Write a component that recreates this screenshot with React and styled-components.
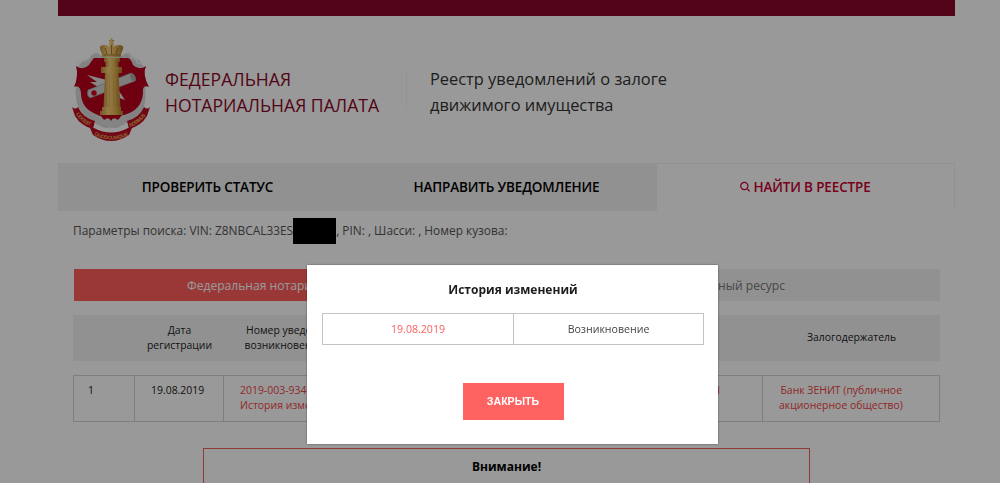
import React, { useState } from 'react';
import styled, { createGlobalStyle } from 'styled-components';

const GlobalStyle = createGlobalStyle`
  body {
    margin: 0;
    background: #fff;
    font-family: 'Open Sans', 'Noto Sans', sans-serif;
    overflow: hidden;
  }

  * {
    box-sizing: border-box;
  }
`;

const Page = styled.div`
  width: 897px;
  height: 483px;
  margin-left: 58px;
  overflow: hidden;
`;

const TopBar = styled.div`
  height: 15.5px;
  background: #8a0828;
`;

const Header = styled.header`
  display: flex;
  align-items: flex-start;
  height: 147.5px;
  padding: 21px 0 0 14px;
`;

const Emblem = styled.svg`
  width: 78px;
  height: 106px;
  flex: none;
`;

const Brand = styled.div`
  width: 242px;
  height: 39px;
  margin: 34px 0 0 15px;
  border-right: 1px solid #f4f4f4;
`;

const BrandText = styled.div`
  margin-top: -5px;
  font-size: 17.6px;
  line-height: 26px;
  color: #8a0828;
  white-space: nowrap;
`;

const ServiceName = styled.div`
  margin: 29px 0 0 23px;
  font-size: 16.4px;
  line-height: 26px;
  color: #333;
  white-space: nowrap;
`;

const Nav = styled.nav`
  display: flex;
  height: 48px;
`;

const NavItem = styled.a`
  display: flex;
  align-items: center;
  justify-content: center;
  flex: 1;
  gap: 3px;
  padding-bottom: 2px;
  border: 1px solid ${props => (props.$active ? '#f3f3f3' : '#f2f2f2')};
  border-bottom: none;
  background: ${props => (props.$active ? '#fff' : '#f2f2f2')};
  color: ${props => (props.$active ? '#c8002f' : '#000')};
  font-size: 13.5px;
  font-weight: 600;
  letter-spacing: -0.15px;
  white-space: nowrap;
`;

const Content = styled.main`
  padding: 0 15px;
`;

const SearchParams = styled.div`
  display: flex;
  align-items: center;
  height: 39px;
  font-size: 11.9px;
  color: #555;
  white-space: pre;
`;

const ParamsText = styled.span`
  padding-bottom: 2px;
`;

const Redacted = styled.span`
  width: 43px;
  height: 26px;
  background: #000;
`;

const Sources = styled.div`
  display: flex;
  height: 32px;
  margin: 19px 0 0 1px;
`;

const Source = styled.div`
  flex: 1;
  padding: ${props => (props.$active ? '0 0 0 113px' : '0 155px 0 0')};
  text-align: ${props => (props.$active ? 'left' : 'right')};
  background: ${props => (props.$active ? '#ff5e5c' : '#f2f2f2')};
  color: ${props => (props.$active ? '#fff' : '#777')};
  font-size: 12.1px;
  line-height: 33px;
  white-space: nowrap;
`;

const columns = '61px 89px 145px 166px 228px 177px';

const TableHead = styled.div`
  display: grid;
  grid-template-columns: ${columns};
  align-items: center;
  height: 46px;
  margin-top: 14px;
  padding: 0 0 1px 1px;
  background: #f2f2f2;
  font-size: 10.4px;
  line-height: 15px;
  color: #222;
  text-align: center;
`;

const NumberHeading = styled.div`
  padding-left: 12px;
`;

const TableRow = styled.div`
  display: grid;
  grid-template-columns: ${columns};
  height: 47px;
  margin-top: 14px;
  border: 1px solid #d2d2d2;
  font-size: 10.45px;
  line-height: 15px;
  color: #222;
`;

const Cell = styled.div`
  padding: 7px 42px 7px 16px;
  border-right: 1px solid #d2d2d2;
  color: ${props => (props.$link ? '#f04444' : 'inherit')};
  text-align: ${props => props.$align || 'left'};
  white-space: nowrap;

  &:first-child {
    padding-left: 14px;
  }

  &:last-child {
    border-right: none;
    padding-right: 38px;
  }
`;

const Notice = styled.div`
  width: 607px;
  height: 60px;
  margin: 26px 0 0 130px;
  padding-top: 9px;
  border: 1px solid #f06060;
  font-size: 12px;
  font-weight: 700;
  line-height: 18px;
  text-align: center;
`;

const Overlay = styled.div`
  position: fixed;
  inset: 0;
  display: flex;
  align-items: flex-start;
  padding: 264.5px 0 0 307px;
  background: rgba(0, 0, 0, 0.4);
`;

const Modal = styled.div`
  display: flex;
  flex-direction: column;
  width: 411px;
  height: 179px;
  padding: 16px 14px 0 15px;
  background: #fff;
  box-shadow: 0 0 2px rgba(0, 0, 0, 0.45);
`;

const ModalTitle = styled.div`
  font-size: 12px;
  font-weight: 700;
  line-height: 18px;
  color: #1c1c1c;
  text-align: center;
`;

const History = styled.div`
  display: grid;
  grid-template-columns: 190px 190px;
  width: 382px;
  height: 32px;
  margin-top: 14px;
  border: 1px solid #c4c4c4;
`;

const HistoryCell = styled.div`
  font-size: 10.6px;
  line-height: 30px;
  color: ${props => (props.$link ? '#ff5c5c' : '#444')};
  text-align: center;

  & + & {
    border-left: 1px solid #c4c4c4;
  }
`;

const CloseButton = styled.button`
  align-self: center;
  width: 101px;
  height: 37px;
  margin-top: 38px;
  padding: 0;
  border: none;
  background: #ff6361;
  color: #fff;
  font-family: 'Liberation Sans', Arial, sans-serif;
  font-size: 10.6px;
  font-weight: 700;
  cursor: pointer;
`;

function Logo() {
  return (
    <Emblem viewBox="0 0 78 106">
      <defs>
        <linearGradient id="gold" x1="0" x2="1" y1="0" y2="0">
          <stop offset="0" stopColor="#c08f3c" />
          <stop offset="0.35" stopColor="#f8cf78" />
          <stop offset="0.65" stopColor="#e3b352" />
          <stop offset="1" stopColor="#a87c30" />
        </linearGradient>
      </defs>
      <path
        d="M19 19 Q24 13 29 19 H50 Q56 13 61 20 Q68 22 72 30 L73 48 Q75 70 68 76 Q62 84 51 87 Q45 93 39 90 Q32 93 26 87 Q15 83 9 74 Q2 66 4 48 L5 32 Q9 23 17 22 Z"
        fill="#d9d9d9"
      />
      <path d="M5 32 Q4 25 10 24 Q16 23 18 20" fill="none" stroke="#f6f6f6" strokeWidth="1.4" />
      <path d="M51 17 Q58 13 59 20 Q66 22 65 26 Q72 25 72 32" fill="none" stroke="#f6f6f6" strokeWidth="1.4" />
      <path
        d="M22 21 H56 Q59 22 61 28 Q67 34 74 29 Q70 37 77 50 Q70 47 71 56 Q70 73 52 78 Q50 82 48 83 L39 85 L30 83 Q28 81 26 78 Q9 72 9 56 Q8 47 2 50 Q7 39 4 29 Q11 34 17 28 Q20 23 22 21 Z"
        fill="#b8001c"
      />
      <path d="M22 80 Q29 76 32 83 Q37 79 39 84 Q41 79 46 83 Q50 75 56 80 L52 88 Q45 86 39 91 Q33 86 25 88 Z" fill="#dcdcdc" />
      <path d="M28 77 Q39 74 50 77 L47 82 Q41 79 39 83 Q37 79 31 82 Z" fill="#b8001c" />
      <path d="M15 38 L35 43 L47 54 L53 63 L37 57 L18 45 L25 45 Z" fill="#e2e2e2" />
      <path d="M16 53 L59 36 Q64 38 63 44 L18 61 Q14 58 16 53 Z" fill="#d2d2d2" stroke="#999" strokeWidth="0.6" />
      <ellipse cx="61" cy="40.5" rx="2.4" ry="4.2" transform="rotate(-22 61 40.5)" fill="#aaa" />
      <circle cx="22" cy="56" r="2.7" fill="#d00022" />
      <path d="M0 70 Q3 73 6 70 Q11 81 23 84 L21 92 Q9 89 3 79 Z" fill="#be0d26" />
      <path d="M78 70 Q75 73 72 70 Q67 81 55 84 L57 92 Q69 89 75 79 Z" fill="#be0d26" />
      <path d="M18 91 H22 Q39 100 56 91 H60 L57 98 Q39 110 21 98 Z" fill="#be0d26" />
      <path id="ribbonLeft" d="M4 77 Q10 87 21 90" fill="none" />
      <path id="ribbonMiddle" d="M22 98 Q39 107 57 98" fill="none" />
      <path id="ribbonRight" d="M58 90 Q68 87 75 76" fill="none" />
      <g fill="#e8a850" fontSize="5.2" fontWeight="700" fontFamily="Liberation Sans, sans-serif">
        <text><textPath href="#ribbonLeft" textLength="19">LEX EST</textPath></text>
        <text><textPath href="#ribbonMiddle" textLength="36">QUODCUMQUE</textPath></text>
        <text><textPath href="#ribbonRight" textLength="20">NOTAMUS</textPath></text>
      </g>
      <g fill="url(#gold)">
        <path d="M30 17 L28 12 Q27 8 32 8 Q37 8 38 10 Q36 5 39.5 5 Q43 5 41 10 Q43 8 47 8 Q52 8 51 12 L49 17 Q50 20 47 20 H32 Q29 20 30 17 Z" />
        <path d="M38.7 1 H40.3 V3 H42 V4.5 H40.3 V7 H38.7 V4.5 H37 V3 H38.7 Z" />
        <rect x="32" y="21" width="16" height="4" rx="1" />
        <rect x="33.5" y="24" width="13" height="7" />
        <rect x="29" y="30" width="21" height="6" />
        <path d="M33 36 H46.5 L48.5 71 H31.5 Z" />
        <path d="M30 70 H49 V74 H51 V78 H28 V74 H30 Z" />
      </g>
      <path d="M37.5 37 V70 M41.5 37 V70" stroke="#c79a48" strokeWidth="0.5" />
      <path d="M32 18 H48 M33 11 L35 17 M39.5 8 V17 M46 11 L44 17" stroke="#8a6628" strokeWidth="0.8" />
    </Emblem>
  );
}

function SearchIcon() {
  return (
    <svg width="10" height="11" viewBox="0 0 10 11" fill="none" stroke="currentColor" strokeWidth="1.2">
      <circle cx="4.3" cy="5" r="3.6" />
      <path d="M6.9 7.6 L9.6 10.3" />
    </svg>
  );
}

function App() {
  const [historyOpen, setHistoryOpen] = useState(true);

  return (
    <>
      <GlobalStyle />
      <Page>
        <TopBar />
        <Header>
          <Logo />
          <Brand>
            <BrandText>
              ФЕДЕРАЛЬНАЯ
              <br />
              НОТАРИАЛЬНАЯ ПАЛАТА
            </BrandText>
          </Brand>
          <ServiceName>
            Реестр уведомлений о залоге
            <br />
            движимого имущества
          </ServiceName>
        </Header>
        <Nav>
          <NavItem>ПРОВЕРИТЬ СТАТУС</NavItem>
          <NavItem>НАПРАВИТЬ УВЕДОМЛЕНИЕ</NavItem>
          <NavItem $active>
            <SearchIcon />
            НАЙТИ В РЕЕСТРЕ
          </NavItem>
        </Nav>
        <Content>
          <SearchParams>
            <ParamsText>Параметры поиска: VIN: Z8NBCAL33ES</ParamsText>
            <Redacted />
            <ParamsText>, PIN: , Шасси: , Номер кузова:</ParamsText>
          </SearchParams>
          <Sources>
            <Source $active>Федеральная нотариальная палата</Source>
            <Source>Объединенный ресурс</Source>
          </Sources>
          <TableHead>
            <div />
            <div>
              Дата
              <br />
              регистрации
            </div>
            <NumberHeading>
              Номер уведомления о
              <br />
              возникновении залога
            </NumberHeading>
            <div />
            <div />
            <div>Залогодержатель</div>
          </TableHead>
          <TableRow>
            <Cell>1</Cell>
            <Cell>19.08.2019</Cell>
            <Cell $link>
              2019-003-934
              <br />
              История изменений
            </Cell>
            <Cell />
            <Cell $link $align="right">Н</Cell>
            <Cell $link $align="right">
              Банк ЗЕНИТ (публичное
              <br />
              акционерное общество)
            </Cell>
          </TableRow>
          <Notice>Внимание!</Notice>
        </Content>
      </Page>
      {historyOpen && (
        <Overlay>
          <Modal>
            <ModalTitle>История изменений</ModalTitle>
            <History>
              <HistoryCell $link>19.08.2019</HistoryCell>
              <HistoryCell>Возникновение</HistoryCell>
            </History>
            <CloseButton type="button" onClick={() => setHistoryOpen(false)}>
              ЗАКРЫТЬ
            </CloseButton>
          </Modal>
        </Overlay>
      )}
    </>
  );
}

export default App;
